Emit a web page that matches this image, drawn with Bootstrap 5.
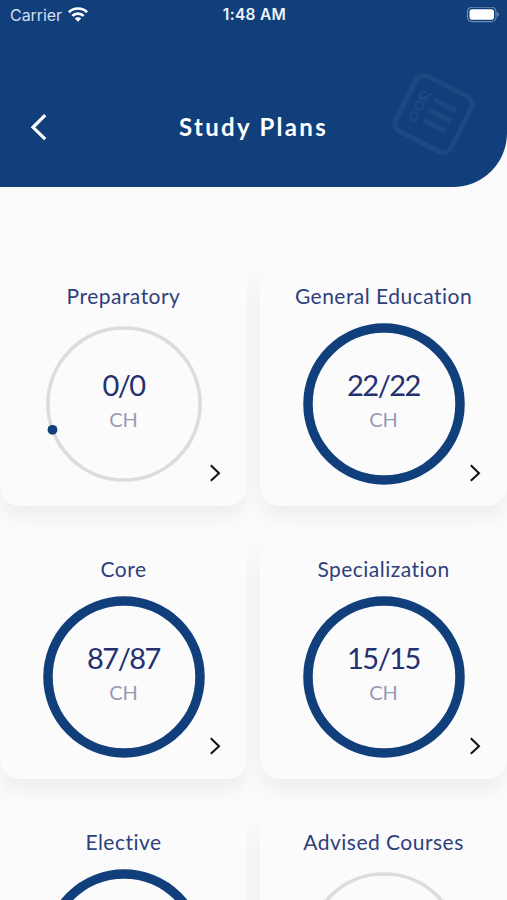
<!DOCTYPE html>
<html lang="en">
<head>
<meta charset="utf-8">
<meta name="viewport" content="width=device-width, initial-scale=1">
<title>Study Plans</title>
<link href="https://cdn.jsdelivr.net/npm/bootstrap@5.3.0/dist/css/bootstrap.min.css" rel="stylesheet">
<style>
  body { background: #fbfbfb; font-family: Lato, sans-serif; height: 900px; overflow: hidden; }
  .app-header { background: #113f7c; height: 187px; border-bottom-right-radius: 54px; }
  .status-bar { height: 30px; padding: 0 8px 0 10px; font-family: Inter, sans-serif; font-size: 16px; line-height: 30px; }
  .status-bar .carrier { color: #d3deee; letter-spacing: -.05px; }
  .status-bar .wifi { margin-left: -2px; margin-top: -2px; }
  .status-bar .clock { font-weight: 600; color: #eef3fa; font-size: 15.5px; letter-spacing: .3px; }
  .title-bar { height: 60px; margin-top: 67px; padding: 0 30px; }
  .screen-title { font-size: 24px; font-weight: 700; letter-spacing: 2.3px; line-height: 30px; }
  .watermark { top: 64px; left: 384px; }
  .plans { display: grid; grid-template-columns: 247px 247px; grid-auto-rows: 246px; column-gap: 13px; row-gap: 27px; padding-top: 73px; height: 713px; overflow: hidden; }
  .plan { background: #fbfbfb; border: 0; border-radius: 20px; box-shadow: 0 12px 18px rgba(0,0,0,.05); }
  .plan-name { color: #2f407c; font-size: 21px; line-height: 28px; letter-spacing: .48px; padding-top: 22px; }
  .ring { width: 162px; height: 162px; margin: 13px auto 0; padding-bottom: 4px; }
  .count { color: #243070; font-size: 29px; line-height: 34px; letter-spacing: -1.5px; }
  .unit { color: #959bb3; font-size: 20px; line-height: 34px; }
  .go { bottom: 23px; right: 26px; }
</style>
</head>
<body>
<header class="app-header position-relative text-white">
  <div class="status-bar row g-0">
    <div class="col d-flex align-items-center gap-2">
      <span class="carrier">Carrier</span>
      <svg class="wifi" width="20" height="15" viewBox="0 0 20 15" fill="none" stroke="#fff" stroke-width="2.7"><path d="M.9 5.2a13 13 0 0 1 18.2 0M4.3 8.9a8.2 8.2 0 0 1 11.4 0"/><path d="M10 14.8l-3.2-3.2a4.6 4.6 0 0 1 6.4 0z" fill="#fff" stroke="none"/></svg>
    </div>
    <div class="col-auto clock">1:48 AM</div>
    <div class="col d-flex align-items-center justify-content-end">
      <svg width="33" height="17" viewBox="0 0 33 17"><rect x="1.5" y=".2" width="28.5" height="14.5" rx="4.5" fill="none" stroke="#6f8bb2" stroke-width="1.2"/><rect x="3.5" y="2.2" width="24.5" height="10.5" rx="2.8" fill="#fff"/><path d="M31.3 5v5q1.5-.7 1.5-2.5T31.3 5" fill="#7e98bb"/></svg>
    </div>
  </div>
  <svg class="watermark position-absolute" width="100" height="100" viewBox="0 0 100 100" fill="none" stroke="#1d4882"><g transform="rotate(27 49.5 50)"><rect x="18.5" y="19" width="62" height="62" rx="9" stroke-width="5"/><path d="M43 37h25M43 48.5h25M43 60h25" stroke-width="5.2"/><g stroke-width="2.2"><circle cx="33" cy="61" r="4"/><circle cx="33" cy="49" r="4"/><path d="M28 37l4 5 8-11M37 37v5h-8v-8h5"/></g></g></svg>
  <div class="title-bar row g-0 align-items-center">
    <div class="col"><svg class="d-block" width="18" height="28" viewBox="0 0 18 28" fill="none" stroke="#fff" stroke-width="3.2"><path d="M15.2 2.2L3 14.3l12.2 11.8"/></svg></div>
    <h1 class="screen-title col-auto mb-0">Study Plans</h1>
    <div class="col"></div>
  </div>
</header>
<main class="plans">
  <a class="plan card text-center text-decoration-none">
    <div class="plan-name">Preparatory</div>
    <div class="ring position-relative d-flex flex-column justify-content-center">
      <svg class="position-absolute top-0 start-0" width="162" height="162" fill="none"><circle cx="81" cy="81" r="76" stroke="#dcdcdc" stroke-width="3.7"/><circle cx="9.5" cy="106.8" r="4.9" fill="#113f7c"/></svg>
      <div class="count">0/0</div><div class="unit">CH</div>
    </div>
    <svg class="go position-absolute" width="12" height="20" viewBox="0 0 12 20" fill="none" stroke="#111" stroke-width="2"><path d="M1.8 2.2L10 10.2l-8.2 7.6"/></svg>
  </a>
  <a class="plan card text-center text-decoration-none">
    <div class="plan-name">General Education</div>
    <div class="ring position-relative d-flex flex-column justify-content-center">
      <svg class="position-absolute top-0 start-0" width="162" height="162" fill="none"><circle cx="81" cy="81" r="76" stroke="#113f7c" stroke-width="9.5"/></svg>
      <div class="count">22/22</div><div class="unit">CH</div>
    </div>
    <svg class="go position-absolute" width="12" height="20" viewBox="0 0 12 20" fill="none" stroke="#111" stroke-width="2"><path d="M1.8 2.2L10 10.2l-8.2 7.6"/></svg>
  </a>
  <a class="plan card text-center text-decoration-none">
    <div class="plan-name">Core</div>
    <div class="ring position-relative d-flex flex-column justify-content-center">
      <svg class="position-absolute top-0 start-0" width="162" height="162" fill="none"><circle cx="81" cy="81" r="76" stroke="#113f7c" stroke-width="9.5"/></svg>
      <div class="count">87/87</div><div class="unit">CH</div>
    </div>
    <svg class="go position-absolute" width="12" height="20" viewBox="0 0 12 20" fill="none" stroke="#111" stroke-width="2"><path d="M1.8 2.2L10 10.2l-8.2 7.6"/></svg>
  </a>
  <a class="plan card text-center text-decoration-none">
    <div class="plan-name">Specialization</div>
    <div class="ring position-relative d-flex flex-column justify-content-center">
      <svg class="position-absolute top-0 start-0" width="162" height="162" fill="none"><circle cx="81" cy="81" r="76" stroke="#113f7c" stroke-width="9.5"/></svg>
      <div class="count">15/15</div><div class="unit">CH</div>
    </div>
    <svg class="go position-absolute" width="12" height="20" viewBox="0 0 12 20" fill="none" stroke="#111" stroke-width="2"><path d="M1.8 2.2L10 10.2l-8.2 7.6"/></svg>
  </a>
  <a class="plan card text-center text-decoration-none">
    <div class="plan-name">Elective</div>
    <div class="ring"><svg class="d-block" width="162" height="162" fill="none"><circle cx="81" cy="81" r="76" stroke="#113f7c" stroke-width="9.5"/></svg></div>
  </a>
  <a class="plan card text-center text-decoration-none">
    <div class="plan-name">Advised Courses</div>
    <div class="ring"><svg class="d-block" width="162" height="162" fill="none"><circle cx="81" cy="81" r="76" stroke="#dcdcdc" stroke-width="3.7"/></svg></div>
  </a>
</main>
<script src="https://cdn.jsdelivr.net/npm/bootstrap@5.3.0/dist/js/bootstrap.bundle.min.js"></script>
</body>
</html>
